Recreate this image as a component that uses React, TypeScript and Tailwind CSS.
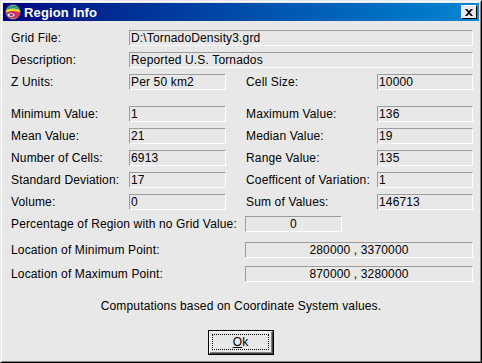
// Region Info dialog (classic Windows style)

const font = { fontFamily: '"Liberation Sans", Arial, sans-serif', letterSpacing: "0.15px" };

function Field({
  value,
  width,
  center = false,
}: {
  value: string;
  width: string;
  center?: boolean;
}) {
  return (
    <div
      className={`${width} h-[16px] shrink-0 border-t border-l border-t-[#9c9c9c] border-l-[#9c9c9c] border-b border-r border-b-white border-r-white flex items-center text-[12px] leading-none text-black ${
        center ? "justify-center" : "pl-[1px]"
      }`}
    >
      {value}
    </div>
  );
}

function Label({ text, width }: { text: string; width: string }) {
  return (
    <div className={`${width} shrink-0 text-[12px] leading-none text-black`}>
      {text}
    </div>
  );
}

function PairRow({
  l1,
  v1,
  l2,
  v2,
}: {
  l1: string;
  v1: string;
  l2: string;
  v2: string;
}) {
  return (
    <div className="flex items-center h-[16px]">
      <Label text={l1} width="w-[118px]" />
      <Field value={v1} width="w-[97px]" />
      <div className="w-[20px] shrink-0" />
      <Label text={l2} width="w-[131px]" />
      <Field value={v2} width="w-[96px]" />
    </div>
  );
}

function AppIcon() {
  return (
    <svg width="16" height="16" viewBox="0 0 16 16">
      <circle cx="8" cy="8" r="7.5" fill="#b0b0b0" />
      <path d="M1.2 6 A7.5 7.5 0 0 1 14.8 6 Q8 3 1.2 6 Z" fill="#1aa080" />
      <path d="M1.2 6 Q8 3 14.8 6 L15.3 8.5 Q8 5.5 0.7 8.5 Z" fill="#f0d820" />
      <path d="M0.7 8.5 Q8 5.5 15.3 8.5 A7.5 7.5 0 0 1 0.7 8.5 Z" fill="#d8305a" />
      <ellipse cx="6" cy="11" rx="3.5" ry="1.8" fill="#e8e8e8" />
      <ellipse cx="6.3" cy="11" rx="2" ry="0.9" fill="#7040a0" />
      <circle cx="8" cy="8" r="7.5" fill="none" stroke="#303030" strokeWidth="0.7" />
    </svg>
  );
}

export default function App() {
  return (
    <div
      className="w-[482px] h-[363px] bg-[#e8e8e8] border-t border-l border-t-[#e8e8e8] border-l-[#e8e8e8] border-r border-b border-r-black border-b-black"
      style={font}
    >
      <div className="w-full h-full border-t border-l border-t-white border-l-white border-r border-b border-r-[#808080] border-b-[#808080] p-[1px] flex flex-col">
        {/* Title bar */}
        <div className="h-[18px] shrink-0 flex items-center bg-gradient-to-r from-[#000080] to-[#1186d2] pl-[2px] pr-[2px]">
          <AppIcon />
          <span className="ml-[3px] text-[13px] font-bold text-white leading-none">
            Region Info
          </span>
          <div className="ml-auto w-[16px] h-[14px] bg-[#e8e8e8] border-t border-l border-t-white border-l-white border-r border-b border-r-black border-b-black flex items-center justify-center">
            <svg width="8" height="7" viewBox="0 0 8 7">
              <path d="M0 0 L2 0 L4 2 L6 0 L8 0 L5 3.5 L8 7 L6 7 L4 5 L2 7 L0 7 L3 3.5 Z" fill="black" />
            </svg>
          </div>
        </div>

        {/* Body */}
        <div className="flex flex-col pl-[8px] pt-[9px]">
          <div className="flex items-center h-[16px]">
            <Label text="Grid File:" width="w-[118px]" />
            <Field value="D:\TornadoDensity3.grd" width="w-[344px]" />
          </div>
          <div className="flex items-center h-[16px] mt-[6px]">
            <Label text="Description:" width="w-[118px]" />
            <Field value="Reported U.S. Tornados" width="w-[344px]" />
          </div>
          <div className="mt-[6px]">
            <PairRow l1="Z Units:" v1="Per 50 km2" l2="Cell Size:" v2="10000" />
          </div>

          <div className="flex flex-col gap-[6px] mt-[16px]">
            <PairRow l1="Minimum Value:" v1="1" l2="Maximum Value:" v2="136" />
            <PairRow l1="Mean Value:" v1="21" l2="Median Value:" v2="19" />
            <PairRow l1="Number of Cells:" v1="6913" l2="Range Value:" v2="135" />
            <PairRow
              l1="Standard Deviation:"
              v1="17"
              l2="Coefficent of Variation:"
              v2="1"
            />
            <PairRow l1="Volume:" v1="0" l2="Sum of Values:" v2="146713" />
            <div className="flex items-center h-[16px]">
              <Label text="Percentage of Region with no Grid Value:" width="w-[234px]" />
              <Field value="0" width="w-[97px]" center />
            </div>
          </div>

          <div className="flex items-center h-[16px] mt-[10px]">
            <Label text="Location of Minimum Point:" width="w-[234px]" />
            <Field value="280000 , 3370000" width="w-[228px]" center />
          </div>
          <div className="flex items-center h-[16px] mt-[8px]">
            <Label text="Location of Maximum Point:" width="w-[234px]" />
            <Field value="870000 , 3280000" width="w-[228px]" center />
          </div>

          <div className="mt-[17px] h-[14px] flex items-center justify-center pr-[8px] text-[12px] leading-none text-black">
            Computations based on Coordinate System values.
          </div>

          {/* Ok button */}
          <div className="mt-[17px] flex justify-center pr-[8px]">
            <div className="w-[66px] h-[25px] border border-black">
              <div className="w-full h-full border-t border-l border-t-white border-l-white border-r border-b border-r-[#404040] border-b-[#404040]">
                <div className="w-full h-full border-r border-b border-r-[#808080] border-b-[#808080] p-[2px]">
                  <div className="w-full h-full border border-dotted border-black flex items-center justify-center text-[12px] leading-none text-black">
                    <span>
                      <span className="underline">O</span>k
                    </span>
                  </div>
                </div>
              </div>
            </div>
          </div>
        </div>
      </div>
    </div>
  );
}
